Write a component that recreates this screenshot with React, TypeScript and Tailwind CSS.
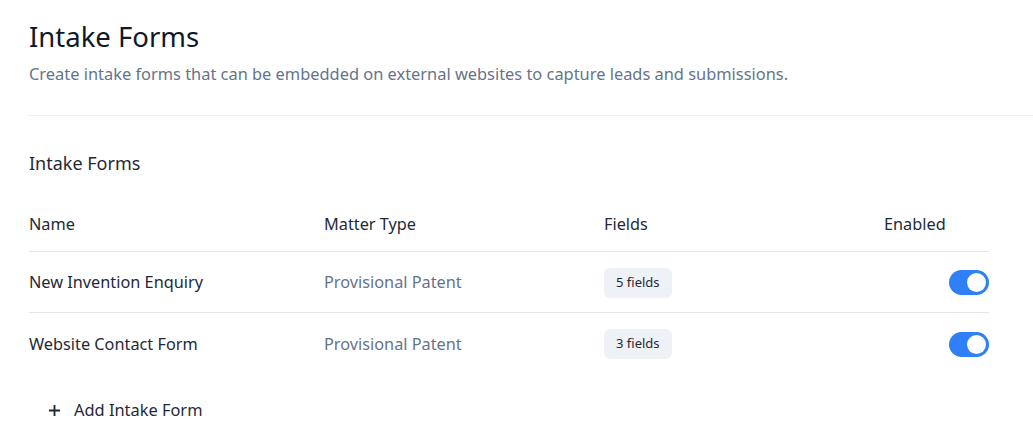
import React from "react";

type IntakeForm = {
  name: string;
  matterType: string;
  fields: number;
  enabled: boolean;
};

const forms: IntakeForm[] = [
  { name: "New Invention Enquiry", matterType: "Provisional Patent", fields: 5, enabled: true },
  { name: "Website Contact Form", matterType: "Provisional Patent", fields: 3, enabled: true },
];

function Toggle({ on }: { on: boolean }) {
  return (
    <button
      type="button"
      className={`flex h-[25px] w-10 items-center rounded-full px-[3px] ${on ? "justify-end bg-[#2f7ff6]" : "justify-start bg-gray-300"}`}
    >
      <span className="block h-[19px] w-[19px] rounded-full bg-white" />
    </button>
  );
}

export default function App() {
  return (
    <div
      className="min-h-screen bg-white pl-[29px] text-[#1f2937]"
      style={{ fontFamily: '"Noto Sans", "Open Sans", sans-serif' }}
    >
      <header className="pt-[18px] pb-[29px]">
        <h1 className="text-[27.5px] leading-[38px] text-[#111827]">Intake Forms</h1>
        <p className="mt-[6px] text-[16.4px] leading-[24px] text-[#64748b]">
          Create intake forms that can be embedded on external websites to capture leads and submissions.
        </p>
      </header>
      <div className="border-t border-[#eef0f2]" />

      <section className="w-[960px] pt-[33px]">
        <h2 className="text-[18px] leading-[28px] text-[#1f2937]">Intake Forms</h2>

        <div className="mt-[35px]">
          <div className="grid grid-cols-[295px_280px_280px_1fr] items-center border-b border-[#e5e7eb] pb-[15px] text-[16.3px] leading-[24px] text-[#1f2937]">
            <div>Name</div>
            <div>Matter Type</div>
            <div>Fields</div>
            <div>Enabled</div>
          </div>
          {forms.map((f, i) => (
            <div
              key={f.name}
              className={`grid h-[61px] grid-cols-[295px_280px_280px_1fr] items-center pt-[1px] text-[16.3px] ${i < forms.length - 1 ? "border-b border-[#e5e7eb]" : ""}`}
            >
              <div className="text-[#1f2937]">{f.name}</div>
              <div className="text-[#64748b]">{f.matterType}</div>
              <div>
                <span className="inline-flex h-[30px] items-center rounded-md bg-[#eef1f5] px-[12px] text-[13px] text-[#1f2937]">
                  {f.fields} fields
                </span>
              </div>
              <div className="flex justify-end">
                <Toggle on={f.enabled} />
              </div>
            </div>
          ))}
        </div>

        <button type="button" className="mt-[24px] ml-[19px] flex items-center gap-[13px] text-[16.4px] text-[#1f2937]">
          <svg width="13" height="13" viewBox="0 0 14 14" fill="none" stroke="currentColor" strokeWidth="2">
            <path d="M7 1v12M1 7h12" />
          </svg>
          Add Intake Form
        </button>
      </section>
    </div>
  );
}
